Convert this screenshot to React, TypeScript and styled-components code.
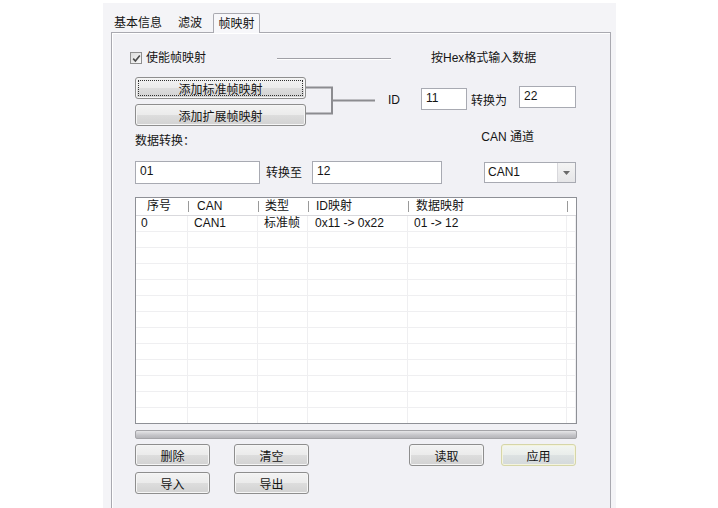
import styled, { createGlobalStyle } from "styled-components";

const GlobalStyle = createGlobalStyle`
  html, body {
    margin: 0;
    padding: 0;
    background: #ffffff;
  }
  body {
    font-family: "Liberation Sans", "Noto Sans CJK SC", sans-serif;
    font-size: 12px;
    color: #141414;
  }
`;

const Page = styled.div`
  width: 718px;
  height: 508px;
  padding: 3px 0 0 103px;
  box-sizing: border-box;
`;

const Window = styled.div`
  width: 513px;
  height: 505px;
  box-sizing: border-box;
  padding: 0 5px 0 8px;
  background: #f4f4f7;
  display: flex;
  flex-direction: column;
`;

const TabStrip = styled.div`
  height: 29px;
  display: flex;
  align-items: flex-end;
  margin-left: -2px;
  position: relative;
  z-index: 1;
`;

const Tab = styled.div<{ $w: number; $active?: boolean }>`
  width: ${(p) => p.$w}px;
  box-sizing: border-box;
  text-align: center;
  font-size: 12px;
  line-height: 16px;
  height: ${(p) => (p.$active ? 20 : 18)}px;
  padding-top: ${(p) => (p.$active ? 2 : 1)}px;
  margin-bottom: ${(p) => (p.$active ? -1 : 0)}px;
  background: ${(p) => (p.$active ? "#f7f7fa" : "transparent")};
  border: ${(p) => (p.$active ? "1px solid #a9a9b0" : "none")};
  border-bottom: none;
  border-radius: 2px 2px 0 0;
`;

const Panel = styled.div`
  flex: 1;
  box-sizing: border-box;
  border: 1px solid #a9a9b0;
  border-bottom: none;
  box-shadow: inset 1px 1px 0 #ffffff;
  background: #f1f1f5;
  padding: 0 33px 0 23px;
  display: flex;
  flex-direction: column;
`;

const Row = styled.div<{ $h: number; $mt: number }>`
  display: flex;
  align-items: center;
  height: ${(p) => p.$h}px;
  margin-top: ${(p) => p.$mt}px;
  flex-shrink: 0;
`;

const TopRow = styled(Row)`
  align-items: flex-start;
`;

const Label = styled.span<{ $ml?: number; $mt?: number }>`
  margin-left: ${(p) => p.$ml ?? 0}px;
  margin-top: ${(p) => p.$mt ?? 0}px;
  line-height: 16px;
  white-space: nowrap;
`;

const RightLabel = styled(Label)`
  margin-left: auto;
  margin-right: 43px;
`;

const CheckBox = styled.span`
  width: 12px;
  height: 12px;
  margin-left: -5px;
  box-sizing: border-box;
  border: 1px solid #8f8f8f;
  background: linear-gradient(135deg, #dcdcdc, #f8f8f8);
  display: inline-flex;
  align-items: center;
  justify-content: center;
`;

const Rule = styled.div`
  margin-left: 71px;
  width: 114px;
  height: 1px;
  background: #a0a0a6;
  box-shadow: 0 1px 0 #ffffff;
`;

const ButtonStack = styled.div`
  display: flex;
  flex-direction: column;
  gap: 5px;
`;

const Button = styled.button<{ $w: number; $default?: boolean; $focus?: boolean }>`
  position: relative;
  width: ${(p) => p.$w}px;
  height: 22px;
  padding: 0;
  box-sizing: border-box;
  font-family: inherit;
  font-size: 12px;
  color: #141414;
  border-radius: 3px;
  border: 1px solid ${(p) => (p.$default ? "#d6d6a8" : "#8e8e8e")};
  background: ${(p) =>
    p.$default
      ? "linear-gradient(#f3f6f2 0%, #e9edeb 50%, #dde2e2 51%, #d4d9db 100%)"
      : "linear-gradient(#f3f3f3 0%, #ebebeb 50%, #dddddd 51%, #d2d2d2 100%)"};
  box-shadow: inset 0 0 0 1px ${(p) => (p.$default ? "#f4f4de" : "#f6f6f6")};

  &::after {
    content: "";
    display: ${(p) => (p.$focus ? "block" : "none")};
    position: absolute;
    inset: 2px;
    border: 1px dotted #303030;
  }
`;

const Connector = styled.svg`
  width: 69px;
  height: 48px;
  flex-shrink: 0;
`;

const Input = styled.div<{ $w: number; $h?: number; $ml?: number; $mt?: number }>`
  width: ${(p) => p.$w}px;
  height: ${(p) => p.$h ?? 23}px;
  margin-left: ${(p) => p.$ml ?? 0}px;
  margin-top: ${(p) => p.$mt ?? 0}px;
  box-sizing: border-box;
  border: 1px solid #a8aab2;
  background: #ffffff;
  padding: 2px 4px;
  line-height: 15px;
  flex-shrink: 0;
`;

const Select = styled.div`
  margin-left: 42px;
  width: 92px;
  height: 21px;
  box-sizing: border-box;
  border: 1px solid #a8aab2;
  background: #ffffff;
  display: flex;
  align-items: stretch;
`;

const SelectValue = styled.div`
  flex: 1;
  padding: 2px 3px;
  line-height: 15px;
`;

const SelectArrow = styled.div`
  width: 17px;
  border-left: 1px solid #d8d8dc;
  background: linear-gradient(#f4f4f4, #e6e6e8);
  display: flex;
  align-items: center;
  justify-content: center;
`;

const List = styled.div`
  margin-top: 13px;
  height: 227px;
  box-sizing: border-box;
  border: 1px solid #8e9096;
  background: #ffffff;
  overflow: hidden;
  flex-shrink: 0;
`;

const ListRow = styled.div<{ $head?: boolean }>`
  display: grid;
  grid-template-columns: 52px 70px 50px 100px 159px 1fr;
  height: ${(p) => (p.$head ? 17 : 15)}px;
  line-height: ${(p) => (p.$head ? 16 : 15)}px;
  border-bottom: 1px solid ${(p) => (p.$head ? "#d9d9dd" : "#efeff1")};
`;

const HeadCell = styled.div<{ $pl: number; $sep?: boolean }>`
  position: relative;
  padding-left: ${(p) => p.$pl}px;
  white-space: nowrap;

  &::before {
    content: "";
    display: ${(p) => (p.$sep ? "block" : "none")};
    position: absolute;
    left: 0;
    top: 3px;
    height: 11px;
    border-left: 1px solid #9a9a9a;
  }
`;

const Cell = styled.div<{ $pl: number }>`
  padding-left: ${(p) => p.$pl}px;
  border-right: 1px solid #efeff1;
  white-space: nowrap;
  overflow: hidden;
`;

const Bar = styled.div`
  margin-top: 6px;
  height: 9px;
  box-sizing: border-box;
  border: 1px solid #a4a4a8;
  border-radius: 2px;
  background: linear-gradient(#e6e6e8, #c4c4c8 60%, #b6b6ba);
  flex-shrink: 0;
`;

const ButtonRow = styled.div<{ $mt: number }>`
  display: flex;
  margin-top: ${(p) => p.$mt}px;
  flex-shrink: 0;
`;

const Gap = styled.div<{ $w: number }>`
  width: ${(p) => p.$w}px;
  flex-shrink: 0;
`;

const head = [
  { t: "序号", pl: 11 },
  { t: "CAN", pl: 9 },
  { t: "类型", pl: 7 },
  { t: "ID映射", pl: 8 },
  { t: "数据映射", pl: 8 },
  { t: "", pl: 0 },
];

const rows = [["0", "CAN1", "标准帧", "0x11 -> 0x22", "01 -> 12"]];
const cellPad = [5, 6, 6, 7, 6, 0];

export default function App() {
  const blank = Array.from({ length: 13 }, () => ["", "", "", "", ""]);
  const all = [...rows, ...blank];

  return (
    <>
      <GlobalStyle />
      <Page>
        <Window>
          <TabStrip>
            <Tab $w={58}>基本信息</Tab>
            <Tab $w={46}>滤波</Tab>
            <Tab $w={47} $active>
              帧映射
            </Tab>
          </TabStrip>

          <Panel>
            <Row $h={16} $mt={17}>
              <CheckBox>
                <svg width="9" height="9" viewBox="0 0 9 9">
                  <path d="M1.2 4.6 L3.4 7 L7.8 1.6" fill="none" stroke="#4a4a4a" strokeWidth="1.6" />
                </svg>
              </CheckBox>
              <Label $ml={4}>使能帧映射</Label>
              <Rule />
              <Label $ml={40}>按Hex格式输入数据</Label>
            </Row>

            <TopRow $h={48} $mt={11}>
              <ButtonStack>
                <Button $w={171} $focus>
                  添加标准帧映射
                </Button>
                <Button $w={171}>添加扩展帧映射</Button>
              </ButtonStack>
              <Connector viewBox="0 0 69 48">
                <path d="M0 10.5 H26 V36.5 H0 M26 23.5 H69" fill="none" stroke="#8c8c90" strokeWidth="2" />
              </Connector>
              <Label $ml={13} $mt={15}>
                ID
              </Label>
              <Input $w={46} $h={22} $ml={21} $mt={11}>
                11
              </Input>
              <Label $ml={4} $mt={16}>
                转换为
              </Label>
              <Input $w={57} $h={22} $ml={12} $mt={9}>
                22
              </Input>
            </TopRow>

            <Row $h={18} $mt={7}>
              <Label>数据转换：</Label>
              <RightLabel $mt={-9}>CAN 通道</RightLabel>
            </Row>

            <Row $h={23} $mt={11}>
              <Input $w={125}>01</Input>
              <Label $ml={6}>转换至</Label>
              <Input $w={130} $ml={10}>
                12
              </Input>
              <Select>
                <SelectValue>CAN1</SelectValue>
                <SelectArrow>
                  <svg width="7" height="4" viewBox="0 0 7 4">
                    <path d="M0 0 H7 L3.5 4 Z" fill="#6a6a6a" />
                  </svg>
                </SelectArrow>
              </Select>
            </Row>

            <List>
              <ListRow $head>
                {head.map((h, i) => (
                  <HeadCell key={i} $pl={h.pl} $sep={i > 0}>
                    {h.t}
                  </HeadCell>
                ))}
              </ListRow>
              {all.map((r, ri) => (
                <ListRow key={ri}>
                  {[...r, ""].map((c, ci) => (
                    <Cell key={ci} $pl={cellPad[ci]}>
                      {c}
                    </Cell>
                  ))}
                </ListRow>
              ))}
            </List>

            <Bar />

            <ButtonRow $mt={5}>
              <Button $w={75}>删除</Button>
              <Gap $w={24} />
              <Button $w={75}>清空</Button>
              <Gap $w={100} />
              <Button $w={75}>读取</Button>
              <Gap $w={17} />
              <Button $w={75} $default>
                应用
              </Button>
            </ButtonRow>
            <ButtonRow $mt={6}>
              <Button $w={75}>导入</Button>
              <Gap $w={24} />
              <Button $w={75}>导出</Button>
            </ButtonRow>
          </Panel>
        </Window>
      </Page>
    </>
  );
}
